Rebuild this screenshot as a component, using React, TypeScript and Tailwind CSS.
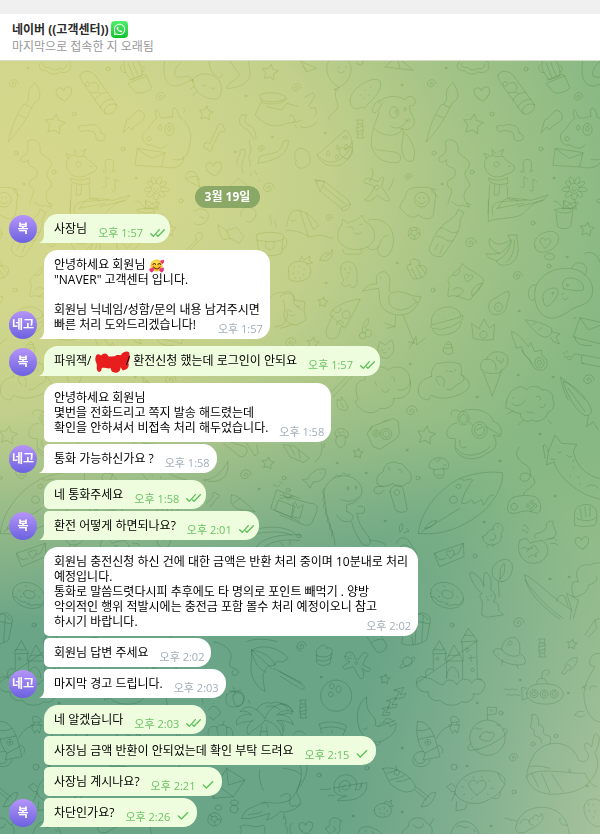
import { Fragment } from "react";
import type { ReactNode } from "react";
import { FaWhatsapp } from "react-icons/fa";

type Status = "read" | "sent";

interface Message {
  id: number;
  lines: ReactNode[];
  time: string;
  status?: Status;
}

interface Group {
  id: number;
  initials: string;
  outgoing: boolean;
  messages: Message[];
}

const groups: Group[] = [
  {
    id: 1,
    initials: "복",
    outgoing: true,
    messages: [{ id: 1, lines: ["사장님"], time: "오후 1:57", status: "read" }],
  },
  {
    id: 2,
    initials: "네고",
    outgoing: false,
    messages: [
      {
        id: 2,
        lines: [
          <>
            안녕하세요 회원님 <LoveFace />
          </>,
          '"NAVER" 고객센터 입니다.',
          "",
          "회원님 닉네임/성함/문의 내용 남겨주시면",
          "빠른 처리 도와드리겠습니다!",
        ],
        time: "오후 1:57",
      },
    ],
  },
  {
    id: 3,
    initials: "복",
    outgoing: true,
    messages: [
      {
        id: 3,
        lines: [
          <>
            파워잭/ <Scribble />/ 환전신청 했는데 로그인이 안되요
          </>,
        ],
        time: "오후 1:57",
        status: "read",
      },
    ],
  },
  {
    id: 4,
    initials: "네고",
    outgoing: false,
    messages: [
      {
        id: 4,
        lines: ["안녕하세요 회원님", "몇번을 전화드리고 쪽지 발송 해드렸는데", "확인을 안하셔서 비접속 처리 해두었습니다."],
        time: "오후 1:58",
      },
      { id: 5, lines: ["통화 가능하신가요 ?"], time: "오후 1:58" },
    ],
  },
  {
    id: 5,
    initials: "복",
    outgoing: true,
    messages: [
      { id: 6, lines: ["네 통화주세요"], time: "오후 1:58", status: "read" },
      { id: 7, lines: ["환전 어떻게 하면되나요?"], time: "오후 2:01", status: "read" },
    ],
  },
  {
    id: 6,
    initials: "네고",
    outgoing: false,
    messages: [
      {
        id: 8,
        lines: [
          "회원님 충전신청 하신 건에 대한 금액은 반환 처리 중이며 10분내로 처리",
          "예정입니다.",
          "통화로 말씀드렷다시피 추후에도 타 명의로 포인트 빼먹기 . 양방",
          "악의적인 행위 적발시에는 충전금 포함 몰수 처리 예정이오니 참고",
          "하시기 바랍니다.",
        ],
        time: "오후 2:02",
      },
      { id: 9, lines: ["회원님 답변 주세요"], time: "오후 2:02" },
      { id: 10, lines: ["마지막 경고 드립니다."], time: "오후 2:03" },
    ],
  },
  {
    id: 7,
    initials: "복",
    outgoing: true,
    messages: [
      { id: 11, lines: ["네 알겠습니다"], time: "오후 2:03", status: "read" },
      { id: 12, lines: ["사징님 금액 반환이 안되었는데 확인 부탁 드려요"], time: "오후 2:15", status: "sent" },
      { id: 13, lines: ["사장님 계시나요?"], time: "오후 2:21", status: "sent" },
      { id: 14, lines: ["차단인가요?"], time: "오후 2:26", status: "sent" },
    ],
  },
];

function LoveFace() {
  return (
    <svg viewBox="0 0 32 28" className="-my-1 inline-block h-[14px] w-4 align-middle" aria-hidden="true">
      <circle cx="15" cy="13" r="12" fill="#fbc02d" />
      <ellipse cx="14" cy="8" rx="8" ry="5" fill="#fde047" />
      <path d="M8 11q3-5 5 0M18 11q3-5 5 0M9 16q7 8 13 0" fill="none" stroke="#6b2d10" strokeWidth="2.2" strokeLinecap="round" />
      <path d="M27 10c-6-3-5-9-1-7 2-4 8 1 1 7ZM6 27c-8-3-6-10-1-8 3-5 9 1 1 8ZM26 27c-8-3-6-10-1-8 3-5 9 1 1 8Z" fill="#e8327c" />
    </svg>
  );
}

function Scribble() {
  return (
    <svg viewBox="0 0 105 66" className="-my-1 -mr-1 inline-block h-[22px] w-[35px] align-middle" aria-hidden="true">
      <path
        d="M3 14C6 8 14 8 18 14C24 6 36 4 40 16C48 18 54 14 60 16C64 8 76 14 78 12C82 2 98 -2 102 4C106 14 104 28 100 36C104 46 98 56 86 58C80 60 80 48 76 50C78 62 66 68 56 64C46 62 50 54 46 52C36 54 24 48 20 52C20 62 12 66 8 60C2 52 8 44 4 36C0 28 0 22 3 14Z"
        fill="#e81e1e"
      />
    </svg>
  );
}

function Ticks({ status }: { status: Status }) {
  return (
    <svg
      viewBox="0 0 45 24"
      className="h-2 w-[15px]"
      fill="none"
      stroke="#5dbf58"
      strokeWidth="4"
      strokeLinecap="round"
      strokeLinejoin="round"
      role="img"
      aria-label={status}
    >
      {status === "read" ? <path d="M2 14l8 8L28 2M20 18l4 4L43 2" /> : <path d="M4 12l9 9L32 2" />}
    </svg>
  );
}

function Avatar({ initials }: { initials: string }) {
  return (
    <div className="flex size-7 shrink-0 items-center justify-center rounded-full bg-linear-to-b from-[#b694f9] to-[#6c61df] text-xs font-semibold text-white">
      {initials}
    </div>
  );
}

function Bubble({ message, outgoing, first, last }: { message: Message; outgoing: boolean; first: boolean; last: boolean }) {
  const color = outgoing ? "bg-[#effddf]" : "bg-white";
  const topLeft = first ? "rounded-tl-[14px]" : "rounded-tl-[5px]";
  const bottomLeft = last ? "rounded-bl-none" : "rounded-bl-[5px]";

  return (
    <li className={`relative w-fit rounded-r-[14px] px-[10px] py-[7px] text-xs leading-[15px] ${color} ${topLeft} ${bottomLeft}`}>
      {message.lines.map((line, index) =>
        // the last line stays inline so the time can sit beside it
        index < message.lines.length - 1 ? (
          <span key={index} className="block min-h-[15px]">
            {line}
          </span>
        ) : (
          <Fragment key={index}>{line}</Fragment>
        ),
      )}
      <span
        className={`float-right mt-1 -mb-1 ml-[11px] flex items-center gap-[7px] text-[11px] leading-[15px] ${
          outgoing ? "-mr-[5px] text-[#6cc264]" : "-mr-[3px] text-[#a3adb8]"
        }`}
      >
        {message.time}
        {message.status && <Ticks status={message.status} />}
      </span>
      {last && (
        <svg viewBox="0 0 5 8" className="absolute bottom-0 -left-[5px] h-2 w-[5px]" aria-hidden="true">
          <path d="M5 0V8H0C3 7 5 4 5 0Z" fill={outgoing ? "#effddf" : "#ffffff"} />
        </svg>
      )}
    </li>
  );
}

// Wallpaper doodles. x, y, radius in pixels.
const stars = [
  [55, 124, 10], [206, 113, 7], [270, 72, 8], [169, 229, 7], [323, 302, 5], [313, 343, 6],
  [426, 435, 9], [268, 463, 6], [358, 453, 5], [385, 679, 5], [572, 644, 5],
];
const hearts = [[64, 94, 8], [214, 169, 8], [346, 153, 7], [582, 543, 7], [306, 828, 7]];
const spirals = [
  [13, 84, 5], [160, 97, 5], [261, 149, 4], [296, 88, 5], [268, 188, 6], [408, 177, 4], [329, 218, 4],
  [470, 243, 6], [517, 276, 5], [290, 343, 6], [588, 380, 6], [411, 411, 6], [301, 646, 5],
  [518, 623, 6], [513, 758, 5], [245, 475, 6],
];
const dots = [
  [28, 68, 1], [108, 69, 2], [74, 114, 2], [16, 153, 2], [123, 149, 2], [54, 172, 2], [24, 184, 1], [136, 178, 1],
  [246, 96, 1], [272, 137, 1], [235, 152, 1], [181, 201, 2], [402, 85, 1], [325, 133, 1], [360, 62, 3],
  [397, 263, 1], [326, 283, 1], [433, 290, 2], [533, 223, 2], [549, 266, 2], [567, 257, 1], [519, 311, 1],
  [518, 375, 1], [553, 377, 1], [410, 364, 1], [477, 397, 1], [407, 450, 1], [337, 463, 1], [284, 478, 2],
  [418, 478, 2], [366, 473, 1], [500, 461, 1], [540, 434, 1], [555, 496, 1], [299, 536, 2], [385, 521, 1],
  [484, 522, 1], [475, 556, 2], [550, 579, 1], [569, 577, 1], [452, 625, 2], [321, 677, 1], [477, 703, 1],
  [520, 680, 1], [568, 693, 1], [501, 713, 2], [402, 748, 1], [367, 768, 2], [319, 775, 2], [454, 767, 3],
  [467, 766, 1], [514, 792, 2], [533, 744, 2], [556, 736, 2], [402, 812, 1], [353, 816, 1], [491, 826, 1],
  [587, 786, 1], [234, 809, 4], [259, 489, 1], [288, 490, 2],
];
const candies = [[360, 129], [542, 648], [303, 709]];

// Each sheet is drawn at three times its final size.
const sheets = [
  {
    x: 0,
    y: 0,
    d: [
      "M125 185C110 195 118 215 140 212C150 225 170 225 180 215C200 225 220 205 210 195C215 185 205 183 200 180M132 190C125 200 140 205 148 202C160 215 175 210 178 205C190 210 200 205 200 192",
      "M25 425C35 380 50 340 72 312L95 322C80 360 50 400 25 425ZM78 312L85 300C90 280 75 275 105 248C125 275 125 300 103 308L97 322M55 345L75 353",
      "M240 225C250 208 270 212 285 225L350 315C352 335 325 350 312 338L262 268C250 250 240 240 240 225ZM262 245a7 7 0 1 0 1 0M275 250c15-8 25 5 20 20M270 275c10 8 20-5 30 5M285 300C290 285 315 275 322 278M300 322C305 305 330 295 338 298M315 340C305 320 335 305 350 315",
      "M375 180C365 205 380 225 395 240L425 228C430 205 415 185 410 180M365 195C355 210 370 220 378 218M425 195C440 205 430 220 425 215M385 250L440 228L455 262C450 275 420 283 408 278ZM388 240L435 222L440 228M385 190L402 235M398 188L415 228",
      "M237 380C245 370 255 382 262 375C285 370 305 380 303 400C315 400 322 418 308 422C298 425 285 420 288 408C285 390 265 392 255 392C240 400 235 390 237 380Z",
      "M370 397L380 360L390 355L412 332C425 328 440 345 430 360L400 382L395 390L388 382Z",
      "M470 355C460 330 470 315 480 350C490 360 500 350 520 350C510 320 530 310 538 352C560 360 580 400 570 430C565 470 550 485 520 478M470 355C450 370 450 385 430 400C420 420 440 440 455 435C480 450 495 445 500 435M405 495L412 445L495 458L485 500ZM412 447L455 475L495 460M447 410a7 6 0 1 0 1 0M508 370a14 18 0 1 0 1 0M508 378a5 8 0 1 0 1 0M550 470C555 500 520 510 485 500M480 375a5 8 0 1 0 1 0M552 325c5 3 3 10-2 12",
      "M495 180C485 230 500 262 530 258C560 250 570 240 578 238M545 185C520 205 515 235 540 232C560 228 575 225 580 245M578 240C590 215 640 215 660 245C668 270 665 290 650 297C620 300 580 280 578 240ZM580 245L568 238M582 260L570 268M590 275L578 288M655 235L668 225M628 180C625 205 640 225 650 228M690 180C700 205 715 215 720 225C710 240 680 250 680 265C720 265 755 245 750 215L745 180M605 255c5 4 10 4 12-2M632 262c3 6 8 6 12 2",
      "M615 430C605 440 615 450 622 445C622 458 640 455 636 443L660 395C675 400 682 385 670 382C672 368 652 368 652 382L630 430C622 425 615 428 615 430Z",
      "M725 345C715 355 715 375 735 385C755 395 750 410 765 418M740 345C730 360 735 370 750 378C765 385 768 400 768 415M725 345L740 345M780 470C810 455 840 470 850 425L865 420C865 465 830 480 775 490Z",
      "M715 500C700 480 725 470 720 450L735 448C740 480 715 485 730 520M750 420c-8 15 10 20 0 40s5 20 0 40M765 512l5 12M755 520l-4 8M780 540l-6 6M690 560L715 535L745 560",
      "M900 445C880 450 880 475 890 480C880 495 895 505 905 505C925 500 935 490 930 475C930 455 915 445 900 445M915 292L938 278L945 288L925 320M900 380C920 388 945 375 952 365M930 325L945 322L950 340L942 350",
      "M780 285C790 275 850 275 860 295C855 310 800 320 785 305ZM785 298C800 310 840 308 858 295M785 305L765 345C790 370 815 385 845 375C870 365 890 370 905 360M800 320L845 330L860 310L895 320M868 350c5-10 15-5 12 3 10 5 5 15-2 15M885 375l5 10",
      "M85 480C60 500 55 470 75 465C95 450 75 430 85 422C105 412 125 430 120 455C135 475 165 480 150 505C125 530 160 540 155 560C130 575 135 600 155 625M85 480C80 510 115 495 112 520C110 545 80 530 90 560C115 570 90 590 90 612M60 590C30 570 40 560 55 570",
      "M200 500C195 475 215 460 235 470L255 468C262 485 290 490 290 505C285 520 265 520 255 528M205 475L198 460L212 465M225 465L222 448L235 462M250 465L258 447L245 455M200 500C205 520 225 540 255 528M213 535C230 545 260 540 268 532L270 550C255 555 225 555 215 545ZM215 555L210 640M230 555L228 585L242 585L245 555M265 555C275 570 262 590 275 600C310 590 330 605 345 600L390 585L375 602L300 620M235 485a8 8 0 1 0 1 0M270 500l8-2M240 625C250 600 280 580 300 605",
      "M312 510C305 515 310 520 318 515L315 485C320 475 340 478 340 485L340 510C330 515 340 520 345 510M308 560c5 8 14 2 10-8l0-22 12 8M335 570c5 8 14 2 10-8l0-25 12 8",
      "M468 550a15 15 0 1 0 1 0M458 550C445 530 460 520 470 548C475 520 495 530 480 552C500 535 510 550 484 562C515 560 515 580 484 574C505 590 490 600 477 582C480 605 455 605 462 582C445 600 430 590 453 574C425 580 425 560 453 562C435 545 445 535 458 550M463 563l1 4M474 563l1 4M462 571q6 6 12 0M470 598L475 630M470 625C455 605 440 600 435 605C440 620 455 628 470 625",
      "M557 525C550 540 575 550 590 555L600 562L596 545C595 525 585 510 567 515ZM560 535C570 535 575 525 592 530M590 540l10-3",
    ],
  },
  {
    x: 300,
    y: 0,
    d: [
      "M90 178C70 200 80 240 117 262C155 245 165 195 140 178M103 268L117 262L113 270ZM108 268C100 300 120 310 112 325C100 345 80 345 88 360M112 212C120 222 130 220 133 212M115 202l2 4M137 200l2 4",
      "M255 200L290 170L338 210ZM290 170L300 205M0 183L50 205L20 215L10 200M5 188L20 215",
      "M150 300C155 260 220 225 240 243C250 265 220 300 200 315L195 325L185 322C165 332 150 325 150 300ZM180 285l3 0M195 270l3 0M210 262l3 0M190 295l3 0M205 285l3 0",
      "M235 310C245 290 290 280 315 300C325 280 350 290 345 310C340 320 330 315 328 320C330 345 345 350 343 370C335 395 310 390 300 385M240 300C220 310 212 330 220 338C235 340 240 320 248 308M238 335C228 365 210 400 215 440C225 480 260 490 295 488C310 475 300 455 275 455C250 450 235 455 225 445M222 385C250 415 300 410 308 385M310 395C340 420 350 455 340 480C325 492 305 480 305 435C308 420 310 410 310 395M282 320a14 17 0 1 0 1 0M288 330a4 6 0 1 0 1 0M315 322a3 6 0 1 0 1 0M272 378C285 390 310 385 322 360M318 358a6 4 0 1 0 8-2",
      "M52 465L137 390C170 420 160 470 130 490C105 505 65 500 52 465ZM60 472C90 505 145 480 155 425M84 453a5 8 0 1 0 1 0M112 436a4 6 0 1 0 1 0M135 408a7 4 0 1 0 1 0M110 465a5 6 0 1 0 1 0M139 433a5 7 0 1 0 1 0",
      "M45 540L60 573L125 625L150 612L145 600L75 545ZM45 540L75 545L60 573M68 558L135 612M125 625C120 640 150 630 152 612M50 550l5-6",
      "M195 600C210 590 215 575 225 560L200 550C185 550 190 535 205 535L235 545C240 530 255 525 250 540L245 560L270 600C265 608 250 600 232 585C220 600 200 610 195 600ZM215 505C225 520 215 535 208 545M282 535C275 550 275 560 265 570M230 555a7 7 0 1 0 1 0",
      "M300 625C298 605 320 600 318 580C330 555 360 565 375 562C400 560 412 580 405 600C405 615 402 630 400 645C390 665 370 655 355 645C330 665 315 635 300 625M365 577a22 22 0 1 0 1 0M352 603C358 614 372 614 378 603M358 592l1 4M371 592l1 4",
    ],
  },
  {
    x: 0,
    y: 200,
    d: [
      "M655 75L680 92L710 82L732 110L718 130L690 115L668 120L658 95ZM680 92L690 115M583 35C590 20 630 25 625 50C620 75 590 80 583 70M600 50l15 5M720 50C722 20 750 10 768 35C770 55 755 70 740 65",
      "M770 103C790 95 840 95 850 105L845 160C820 170 790 170 778 158ZM770 120C820 130 840 122 849 118M852 112C868 115 860 150 845 148M800 125q-12 20 12 25q18-10 8-25M812 45c-8 10 8 15 0 30M825 60c-4 8 8 12 2 20",
      "M545 165L590 120C580 105 595 92 605 100C610 112 602 125 595 124L552 172M500 160C520 150 540 165 545 185",
      "M805 300C820 270 850 280 860 275C880 270 890 300 880 310L905 330M825 380C850 380 870 360 860 330",
    ],
  },
  {
    x: 280,
    y: 200,
    d: [
      "M20 80C25 50 30 25 60 32C90 40 110 65 115 78L100 88M60 32L85 110L105 108M78 40L100 88M85 110C65 95 40 90 18 92M105 108C130 100 140 115 158 115M32 60c5 5 10 5 14 0",
      "M0 290C20 270 45 280 40 300L75 305L72 330L78 360L50 375C20 375 5 355 15 325L10 300M0 385C20 380 35 375 40 370M25 330l10 5M50 320l10-3M30 345q8 8 14-2",
      "M185 75L188 58L205 70C220 60 235 62 245 45L255 65C290 80 290 120 270 135C240 160 190 150 175 120C172 105 172 90 185 75ZM265 60C310 50 345 80 340 130C335 160 325 170 310 170C290 165 290 145 300 130C305 115 310 110 322 105M190 150C185 160 195 165 240 162C248 155 245 148 240 145M205 82C215 78 222 85 220 90M238 75l8-3M222 98c5 10 10 5 10 0 3 8 12 5 12-2M262 140C270 155 290 150 295 140",
      "M402 82a18 18 0 1 0 1 0M396 92l12-2 5 10-9 8-10-6ZM396 92l-6-6M408 90l4-6M413 100l7 2M404 108l0 10M394 102l-8 4",
      "M535 28L552 38L540 60C545 90 520 120 490 165C480 178 445 165 448 145C460 110 480 75 510 60L527 45ZM480 85C495 75 510 110 535 95M470 110C485 100 500 135 520 120M475 130L465 150M490 135L480 160",
      "M685 105L712 105L710 115C720 145 715 190 680 195C660 198 650 190 650 182C640 180 615 170 620 160C640 165 650 160 660 160C640 155 620 135 630 115C645 140 670 135 690 120ZM695 120C690 150 675 170 650 182M703 120C705 150 695 175 680 185M660 160C675 150 690 135 693 120",
      "M765 140C755 115 790 90 820 95C850 105 835 145 800 155C780 160 768 155 765 140ZM795 145C780 130 775 118 785 115C792 112 796 120 796 122C800 112 812 115 812 122C812 132 800 140 795 145M808 160a15 10 0 1 0 1 0",
      "M625 0L625 65C650 50 720 60 735 35C760 10 770 5 790 0M640 45C630 25 640 10 660 5L740 0M650 25L730 10M515 5C530 15 535 22 550 15C560 25 572 20 570 12L560 10",
      "M825 30C840 22 870 25 880 30C875 42 835 42 825 30ZM828 38L833 80C845 88 865 88 872 78L878 38M850 30L852 0M850 25C835 5 825 0 820 5M855 25C870 5 890 5 895 8C890 20 875 28 855 25",
      "M25 215C22 190 50 180 70 185C90 190 98 210 88 230C70 250 35 245 28 238C25 230 25 220 25 215ZM60 182L65 168L72 180L90 168L88 182L98 188L80 192M42 200l1 4M58 198l1 4M72 205l1 4M40 218l1 4M55 215l1 4M70 222l1 4M45 232l1 4M60 232l1 4",
      "M120 180C125 160 140 158 150 160L158 148L155 170C145 185 130 183 120 180ZM135 172L150 162",
      "M182 205C182 180 225 175 230 210C232 240 235 260 220 262C210 265 210 250 205 255C195 265 185 255 185 250L192 240C185 230 182 220 182 205ZM194 205l2 6M210 203l2 6M200 218c4 4 8 4 10 0M198 236L205 230",
      "M385 210C375 200 385 190 393 195C385 180 400 172 410 180C422 180 420 195 415 198C430 190 445 205 438 220C430 235 410 240 398 235C390 225 390 215 385 210ZM395 205L410 235M408 200L425 232M418 196L436 220",
      "M248 273C260 255 275 250 290 252M248 273L295 265M290 250C285 230 295 215 312 215C330 220 332 240 328 260C325 290 340 275 355 275C385 278 395 290 405 288L422 290C420 310 405 320 395 335C370 350 330 350 305 320C295 300 300 280 295 265M328 285C320 310 335 330 365 330C390 325 400 315 410 305M400 295L412 310M347 347L345 380L315 370M345 380L320 385M370 347L403 430M403 430L385 425M388 445L408 410L410 435L435 415M302 232l1 4",
      "M548 192C555 205 590 215 612 240C610 255 580 280 572 300C545 300 535 280 505 290C500 270 515 260 503 240C520 220 540 205 548 192ZM560 245C550 232 552 222 558 224C564 220 566 228 566 230C572 220 580 225 578 232C575 240 565 243 560 245M520 270C525 260 540 262 548 268C555 275 540 285 530 290M575 275C580 260 595 250 608 250C600 265 590 280 578 288ZM520 225C530 235 545 210 540 205",
      "M240 298L230 320L195 385L150 345C150 325 200 300 240 298ZM160 345C150 360 140 380 138 400C145 425 170 420 178 400C180 385 185 375 190 380M198 332a12 12 0 1 0 1 0M160 330a10 10 0 0 0 22-8M170 375a8 8 0 0 1 20-5",
      "M238 407a10 10 0 1 0 20 0a10 10 0 1 0-20 0M255 400a10 11 0 1 1 6 10M248 397C245 375 255 360 265 355C268 370 262 375 255 380L262 390",
      "M455 370C448 335 490 315 515 322C540 330 545 345 540 352L455 375ZM455 375C445 385 460 388 470 385C480 395 500 380 510 382C530 370 555 360 548 345L540 350M458 388C460 400 475 408 490 405C520 402 540 390 545 365M475 345l1 1M490 335l1 1M505 345l1 1M520 338l1 1M490 355l1 1",
      "M685 275C695 290 680 300 680 320C675 345 640 352 630 335C620 315 630 300 645 295C665 285 670 275 685 275ZM655 308a12 13 0 1 0 1 0M650 318l4 4",
      "M575 372L580 415C600 422 625 422 640 418L644 372L628 385L612 357L598 385ZM610 393a11 11 0 1 0 1 0",
      "M765 270C770 235 810 205 860 205C910 205 940 240 938 275C935 310 905 315 880 325C850 345 830 360 800 352C775 340 760 310 765 270ZM875 205C880 185 910 180 920 205C920 220 915 225 912 225M768 255C750 250 740 275 748 295C755 305 762 300 764 298M790 300C780 275 810 260 830 265C845 275 820 310 805 318C795 320 790 310 790 300ZM850 265C840 240 860 230 880 235C905 240 915 260 910 270C895 275 865 270 850 265ZM848 293C852 302 862 300 865 292M845 282l8-1M862 253a3 3 0 1 0 1 0M818 277a3 3 0 1 0 1 0",
      "M737 360C760 360 790 370 815 385C818 400 810 410 795 412C770 405 755 385 737 360ZM815 395L840 402L828 410L838 432L820 425L812 412M758 375L768 368M775 392L785 382",
      "M880 410L900 353L975 370L960 430ZM900 353L925 390L975 370M885 410C885 430 900 438 935 437M880 355l8-2",
      "M695 395C710 395 730 420 745 440L752 428L765 455L785 450L785 465C805 475 808 500 790 510C770 515 755 500 750 480C735 465 738 468 725 450M695 395C695 420 710 430 708 445L725 440C730 470 740 465 755 490M778 472a14 16 0 1 0 1 0M778 480a6 8 0 1 0 1 0",
      "M605 510C595 490 610 475 620 478C625 455 660 448 680 465C690 485 680 505 665 510C660 525 620 525 605 510ZM610 518L637 588L665 512M620 478C640 475 650 490 648 510M650 470c-5 20 15 5 12 20 5 0 10-10 8-15",
      "M490 455C488 440 500 425 508 425C515 432 520 450 518 460C510 465 495 463 490 455M495 445L517 443M500 433L514 435",
      "M870 470C860 465 855 475 865 478C880 485 870 460 890 462L905 465M910 465L975 478M905 490L970 502M910 465a6 13 0 1 0 0 26M850 458l5 4M860 452l1 5M852 472l5-2",
      "M415 575C410 540 450 530 455 530M545 525C570 540 575 560 560 570C540 590 480 605 455 585L445 600C430 600 415 590 415 575M455 530C450 500 475 485 480 490C500 485 520 485 540 492C545 500 545 515 543 525C560 530 550 545 540 550C520 555 520 575 500 568M480 555C460 540 470 525 475 530C485 525 500 540 490 560M500 510l2 4M525 508l2 4M508 515l8 0",
      "M235 600C220 560 230 540 255 540C255 500 300 490 325 510C350 490 390 505 390 540C395 560 370 575 355 570M305 568c5 12 20 12 22 0M285 545l5 12M335 530c8 0 10 8 8 15",
      "M842 532C860 545 900 580 915 600M842 532C845 560 860 590 865 600M295 440L300 425L315 435L335 420C345 440 345 465 320 475C300 475 290 460 295 440M305 450l4 1M325 447l4-2M310 458q6 5 10-2",
    ],
  },
  {
    x: 280,
    y: 380,
    d: [
      "M230 60C225 60 225 75 240 85C260 105 290 100 300 85C330 90 345 70 340 55C370 60 400 40 390 0M150 40L200 -10M160 50L215 -10",
      "M680 65C680 45 700 25 715 22C725 15 735 25 740 30C745 15 780 15 785 30C805 25 825 45 818 60C830 75 815 95 805 95C800 120 770 130 755 120C740 130 720 120 722 100C700 100 690 85 680 85C675 75 678 70 680 65ZM695 70C705 85 730 75 735 60M700 92L683 102M730 120L715 135M805 120L815 133M700 52l1 4M770 50c10-5 15 5 10 10M780 80c8 8 15 0 15-8M740 95c10 8 15-5 20 5",
      "M850 5C880 10 930 60 935 95C930 110 915 110 905 100C880 80 860 40 850 5ZM865 25L915 95M925 110L920 140L940 125L955 150",
      "M165 160C168 140 195 140 205 160C205 170 200 175 195 172C200 190 190 205 178 202C165 195 165 175 170 172ZM168 170C180 165 195 165 200 172M175 155l8 5M187 152l5 6",
      "M172 60C185 55 180 75 185 50C190 65 205 70 203 85C200 95 190 92 188 90C175 90 168 80 172 60ZM183 70L192 85",
      "M262 160L275 140L340 115L355 125L358 160L350 175L300 208L280 200ZM288 150a10 10 0 1 0 1 0M288 156a4 4 0 1 0 1 0M318 145a17 17 0 1 0 1 0M318 152a10 10 0 1 0 1 0M270 152L275 140M310 125l15-5",
      "M515 105C505 90 530 85 540 95C580 80 630 90 640 125C665 130 668 155 660 170L640 165C655 190 650 210 620 220C600 240 550 245 530 215C520 205 530 185 525 175C500 180 495 160 505 145C515 130 525 130 530 130M550 95a17 20 0 1 0 1 0M550 103a11 13 0 1 0 1 0M598 125a23 25 0 1 0 1 0M598 133a15 17 0 1 0 1 0M568 125L578 135M540 180C535 210 555 205 560 200M530 205C550 240 610 225 630 200M618 140L660 165M590 150L605 142",
      "M10 195L30 230L70 248L88 235L45 200ZM30 200L45 225M55 210L60 235M125 190C130 215 120 235 105 245M133 190l0 12",
      "M68 300L82 310L90 325L100 305C120 310 140 290 137 268C110 262 90 280 85 295ZM120 278l3 2",
      "M0 345L90 370C110 370 115 380 110 395L95 430C85 440 75 435 65 432L0 405M0 355L40 350M40 370L35 410L60 415L70 375M45 365l10 20 12-10",
      "M132 340C135 300 175 280 210 290C240 300 255 330 240 350C225 375 205 370 200 375L200 395C225 400 225 425 200 425C180 425 175 410 170 405M132 340L140 400C150 440 165 470 165 495M215 425C220 455 240 480 245 490C255 500 275 498 270 480C265 460 240 450 230 400L250 400C260 385 250 375 235 380M270 480L300 485C315 490 320 495 315 498M203 320a3 5 0 1 0 1 0M228 318a2 5 0 1 0 1 0M180 358C205 368 225 365 235 350M160 295l10-10 10 5 10-12 12 8 10-3M132 325l-5 12 6 10-5 12 6 10-4 12 8 8-3 14 9 8-3 14 9 8-2 14 9 8-2 14",
      "M292 310C285 290 300 280 310 275C310 250 340 240 355 250C375 250 375 265 385 272C400 285 395 310 380 310C365 325 345 320 340 310C320 320 300 325 292 310ZM330 335L345 385C350 400 375 400 382 390L370 330C365 310 335 310 330 335ZM350 328a8 9 0 1 0 1 0M310 320C290 315 280 325 282 335C295 350 310 335 312 330M325 260l5 12M355 268c8-2 12 4 10 10",
      "M447 262C445 240 470 228 490 235C510 245 508 260 502 268L490 265C495 285 490 295 480 295C465 295 458 280 462 270ZM462 270L490 265M465 240c5 8 15 5 15-5M490 255l8 0M470 285l15 0",
      "M415 460C420 400 470 330 540 295C590 275 640 275 667 278C672 310 650 350 620 385C570 430 500 470 415 460ZM540 295C555 310 570 290 578 300C560 325 545 355 545 370C570 375 575 345 580 370C600 370 605 345 610 375C625 365 620 345 640 345M435 445C440 430 460 420 470 422C465 435 450 445 435 445M520 348a12 11 0 1 0 1 0M535 313a8 6 0 1 0 1 0M425 455L540 385",
      "M805 215L800 255L822 245C830 280 870 320 920 345L975 362M790 200C788 190 800 190 805 215L825 165L845 190L890 193L880 215C890 260 920 290 975 300M812 238c5-5 10 5 15 0M860 225c5 3 8 10 15 5M795 235L790 200M835 215l4 5 4-6M880 260l1 4M870 285l1 4M895 290l1 4M900 310l1 4M880 240l1 4M920 320C930 310 950 315 955 325",
      "M718 202C700 220 715 240 730 250C755 260 755 285 745 300C730 310 715 300 722 285C735 270 760 285 765 305C760 325 735 325 730 345M700 352C720 345 745 345 765 350C785 360 788 400 770 400C755 395 740 388 715 398C690 405 680 395 683 380C685 365 690 358 700 352ZM702 370a10 10 0 1 0 1 0M743 372a5 5 0 1 0 1 0M765 372a5 5 0 1 0 1 0M755 362a5 5 0 1 0 1 0M754 383a5 5 0 1 0 1 0",
      "M885 435C880 400 885 380 900 378C915 370 935 372 945 385C955 400 950 430 945 435C925 442 900 440 885 435ZM900 385L905 415M915 380L918 410M930 380L930 410M890 415C910 425 935 425 948 412",
      "M608 470L622 462C625 445 640 450 640 450C635 430 655 425 663 435C675 445 668 455 662 460C670 480 655 495 635 495C620 495 608 485 608 470ZM640 460C655 470 645 485 630 480M652 440l1 2M625 495l-5 6M640 495l0 6",
      "M720 480C710 500 715 535 745 548C775 555 800 540 803 515C805 500 795 485 785 480M720 480L740 475L750 490L765 485L785 482M765 475C755 450 790 470 800 440C795 425 815 420 820 425C815 435 825 440 828 460C825 480 800 475 795 480M742 515c5-15 10-15 15-10 0-12 10-12 12 0 10 5 8 15-2 15l2 10-12-6-12 8M730 435c8 0 15 5 15 15M728 450c8 0 10 8 15 8M808 478c8-5 15-8 22 5M812 490c8-2 20 2 22 5M725 505c10-10 20 10 30 0",
      "M463 520L550 490L552 530L480 560ZM463 520L480 540L498 535M550 490L535 520L522 524M512 535C492 522 500 508 510 515C515 503 535 512 512 535",
      "M605 640C580 620 560 575 575 577C595 585 605 600 612 620C610 600 610 575 620 578C635 590 635 610 632 630C648 640 650 655 640 665C655 670 660 680 655 690L670 705L620 712L605 705C605 685 610 670 605 660C598 655 598 645 605 640ZM665 605C640 605 630 580 640 560C655 535 690 530 697 555C700 580 685 605 665 605ZM655 605L658 650M662 565L672 550L675 558L672 580L660 598ZM618 650l4 3M632 648l4-2M622 660l6 0",
      "M350 490C355 470 375 470 385 480L410 520C412 545 405 560 400 555M362 500C370 490 385 495 390 505M360 455c-5-10 0-20 5-25 5 10 5 20-5 25M372 458l15-5-8-8",
      "M735 585C735 620 770 670 840 718M735 585L745 590C790 620 830 665 875 690M735 600C770 650 810 690 850 715M895 660L860 640L875 690L870 718M880 650C870 620 875 600 895 605C880 570 900 550 930 555C945 545 960 550 965 550M880 650C900 655 930 630 925 615C945 610 955 600 950 590M830 665C830 650 845 640 855 650L865 680M895 660L880 715",
      "M452 640C450 615 480 600 510 610C540 620 555 650 550 665C540 690 500 690 475 675C460 665 452 655 452 640ZM485 640C485 625 515 630 520 645C518 660 488 660 485 640ZM455 650C470 650 470 670 490 665C505 685 520 670 530 675C545 675 545 660 550 655M470 630l4 4M490 618l5 2M520 630l-3 4M530 650l4 3M475 650l4 0M500 670l4-2",
      "M395 620c10 0 12 15 0 30M400 710C410 695 430 700 445 720",
    ],
  },
  {
    x: 0,
    y: 370,
    d: [
      "M683 275C690 320 660 345 610 330C640 330 665 310 683 275M670 220L720 260C735 265 750 240 735 230L690 215M740 220L765 258L775 250L770 225",
      "M620 400L640 378c-5-12 8-15 10-5 12-2 10 12 0 12L630 412M695 375C705 370 740 400 765 425M695 375C685 400 705 425 740 420C755 420 765 430 765 425M700 400L720 385",
      "M830 360L900 385M830 360L812 415L900 455M850 370l15 20 10-15M825 420l10-30 50 20-10 30ZM820 345c8 0 12 8 20 0M840 335l8 6",
      "M767 540C770 510 830 490 900 495M785 540C800 515 850 505 900 512M805 530l20 10M840 515l10 12M870 512l0 12M770 530L785 540M720 165L735 190M745 160L770 190",
    ],
  },
  {
    x: 0,
    y: 530,
    d: [
      "M755 360C780 345 830 345 865 385L850 395C840 400 830 385 825 405C815 410 800 400 795 425C785 430 790 455 795 485C765 470 745 430 755 390ZM755 360L815 415M755 360C790 365 815 380 825 405M755 360C760 390 775 420 795 425M820 415L905 458",
      "M680 495C670 520 690 535 705 530C730 530 740 505 728 490C715 480 690 480 680 495ZM705 487L700 470M705 487L690 482M705 487L722 480",
      "M640 335C690 345 700 375 690 395C680 420 720 410 715 430C700 445 690 430 700 420M740 335C760 325 800 325 830 335M890 350a18 14 0 0 0 14 14",
      "M770 540C780 520 800 515 815 520C835 510 860 525 865 540M800 530C815 525 830 530 840 540M640 520l1 1M745 510L750 520",
      "M635 15C645 5 660 -5 670 10L665 20M735 20C760 -15 860 -20 890 15M750 18C770 5 850 0 875 15",
    ],
  },
  {
    x: 280,
    y: 600,
    d: [
      "M262 112L290 155C300 162 322 150 320 135L305 110M275 130C280 120 300 115 308 120",
      "M368 110L365 130C380 140 420 135 440 120L452 60C445 35 420 35 415 45C400 40 390 50 392 60M395 110L400 135M410 60L405 130M430 50L425 125M392 60L450 72",
      "M110 160C105 145 120 145 122 138C130 130 145 140 140 145C155 140 160 150 155 160L150 190C135 200 115 198 110 185ZM108 165C125 175 145 172 157 160M112 180C130 185 140 185 155 172",
      "M195 170C195 155 215 150 222 165C228 180 225 180 235 178L250 158C265 155 268 170 258 172L248 195L270 205C272 218 262 215 255 212L245 205C255 220 252 235 245 237C235 235 225 205 220 200L195 208C185 205 190 195 195 195L210 185C200 182 195 178 195 170ZM203 168l1 2M212 165l1 2M205 176l8-2M228 185a4 4 0 1 0 1 0",
      "M368 185a14 14 0 1 0 28 0a14 14 0 1 0-28 0M366 192C350 210 365 205 385 195C410 180 410 165 395 175",
      "M168 240a47 47 0 1 0 1 0M155 250a7 8 0 1 0 1 0M175 258a8 10 0 1 0 1 0M152 275a7 8 0 1 0 1 0",
      "M0 215L60 250C80 260 75 275 60 265M0 228L55 262M0 310C30 310 40 330 35 342C20 335 10 345 0 345M0 360C12 370 15 385 10 392",
      "M410 250C405 230 430 225 440 235C430 210 445 200 460 210L460 162L457 158L478 122L498 158L495 180M460 162L498 160M460 150C470 145 480 155 492 148M497 182L522 135L550 182ZM505 168C520 160 530 172 540 165M500 185L500 235M548 180L548 235M543 125L565 85L592 122ZM552 108C565 100 570 112 582 106M546 125L550 175M590 125L592 235C610 235 620 255 612 265C605 285 590 285 580 280C585 300 560 312 545 305C530 320 495 320 480 300C460 310 440 285 445 275C425 280 408 265 410 250ZM500 235C500 190 535 190 537 235M445 235C460 235 465 250 490 255C495 235 520 235 530 255C540 230 570 235 575 250C580 240 590 235 605 240M472 172a4 4 0 1 0 1 0M562 145a5 5 0 1 0 1 0M577 205a5 5 0 1 0 1 0M565 175l20-3M572 165l2 20M526 228l2 2",
      "M640 155C640 145 655 145 665 148C665 125 685 110 705 113C720 120 722 145 718 160C730 165 740 180 735 190C710 205 650 185 640 155ZM665 148C675 165 700 175 718 165M668 180L665 195M710 195L715 205M690 123a6 6 0 1 0 1 0M680 138l4-3M655 165l1 1M680 178l1 1M705 183l1 1",
      "M845 218L855 205C855 185 875 172 892 172C892 190 880 210 862 212L855 222ZM880 182l2 2M862 195C868 192 875 198 872 205",
      "M740 280C742 255 770 250 800 252C835 252 852 270 850 285C845 305 815 315 790 312C765 312 740 300 740 280ZM740 265L725 262L727 300L742 295M770 250C770 235 785 232 795 238L802 250M785 235C785 215 790 210 805 210C810 215 808 225 800 225M672 268c8-5 12 5 20 0s12 5 20 0M680 285c8-5 12 5 20 0s12 5 20 0M762 269a12 12 0 1 0 1 0M762 275a6 6 0 1 0 1 0M792 270a12 12 0 1 0 1 0M792 276a6 6 0 1 0 1 0M822 270a12 12 0 1 0 1 0M822 276a6 6 0 1 0 1 0",
      "M260 292C240 300 225 340 235 375C245 420 290 440 320 415C335 410 350 390 348 370L330 380C325 360 305 365 295 380L285 375C290 365 285 355 275 345C260 330 258 310 260 292ZM295 380L345 362M310 365C315 350 335 355 340 365M250 385c5 5 12 3 12-2M285 430C290 440 300 435 302 425",
      "M308 325L328 320L316 338L330 338L326 346L306 346L314 330ZM320 302L348 292L336 315L352 312L348 322L322 326L332 306ZM342 270L372 262L360 284L378 280L372 292L346 298L358 276Z",
      "M118 372C150 360 185 368 200 378L190 405M118 372L125 400M125 385C150 378 175 380 195 390M40 405C45 390 65 390 75 402M155 390l3 10",
      "M413 365C435 360 460 385 472 440L435 460C415 440 405 395 413 365ZM411 390C425 395 440 390 450 385M415 418L462 408M443 418a9 9 0 1 0 1 0M443 424a3 3 0 1 0 1 0M435 460L430 480L480 470L472 440M430 455C405 450 395 475 400 490C410 505 445 505 450 480M405 475C405 495 430 495 435 482M475 435C490 440 490 455 485 460M470 415C480 395 490 385 510 378M512 352C515 345 535 348 538 365L515 368ZM515 370L510 385L518 400L525 390L532 400L538 380L530 368M505 375L540 375",
      "M622 360a53 53 0 1 0 1 0M622 358L622 322L650 322L648 342L622 345M572 430C555 445 565 455 580 450C620 445 660 420 680 400C685 385 675 385 668 388M600 410C605 395 625 390 625 400C640 390 650 405 635 415C640 425 615 425 610 420C600 420 598 415 600 410ZM630 330l8 4M585 385C595 380 600 395 605 385M650 375l10 0M590 445l8 5",
      "M740 530C745 480 770 435 820 430C870 428 890 460 895 480C920 495 935 470 920 455C905 430 920 420 935 440C940 420 940 400 950 402C965 410 955 440 945 460C970 500 935 575 850 580C800 590 750 575 740 530C770 500 850 520 915 520C925 540 935 560 950 560M755 520L775 560M785 520L810 578M815 522L850 575M868 508a4 4 0 1 0 1 0M750 500C770 495 790 500 810 505",
      "M755 345C770 335 780 360 775 375C800 375 785 400 795 405C820 405 810 425 810 430M755 345C760 365 745 380 755 385C770 390 755 405 770 410C790 415 780 425 785 430",
      "M975 165C940 150 925 175 930 195L945 200C920 240 905 270 915 310C925 350 940 365 975 370M905 265L920 255M908 258L918 268M885 345C900 355 910 350 915 345M885 345C890 330 905 335 912 335M915 105L945 60L950 85L925 112M945 60L975 50M950 260C935 255 925 260 930 270",
      "M525 580C525 540 570 510 620 512C670 515 685 540 670 560C665 580 640 590 625 600C590 620 540 610 525 580ZM590 585C570 570 560 550 570 545C580 535 590 545 592 550C600 535 620 540 618 555C615 570 600 578 590 585ZM525 560L515 550L500 560L515 575L525 575M515 602L525 580M530 605L528 632L555 628L562 612M640 595C655 600 665 590 660 575M655 520C660 535 665 545 672 550M545 560l5 3M555 540l4 4M580 530l2 5M605 528l0 5M630 540l-4 3M640 565l-6 0M625 585l-3-4M550 585l5-3M575 598l2-5",
      "M308 505L330 550C350 570 380 585 400 570C415 560 400 545 385 530C360 510 335 500 308 505ZM405 570L440 600M410 562L448 592M425 620C430 600 450 575 467 577C465 600 445 625 425 620ZM320 520C335 515 345 515 350 510M330 540C350 535 370 530 375 525M350 545C365 545 380 540 390 535M350 510a8 8 0 1 0 1 0M350 510L348 497",
      "M162 565C158 540 180 520 205 525C230 530 235 555 225 570C245 570 245 560 245 550L240 560M245 550L260 548C265 575 240 595 215 600L172 603C175 595 195 590 200 588C175 590 162 580 162 565ZM195 555C185 558 185 570 195 570C215 570 215 545 200 542C180 540 172 560 180 575M120 570c10-8 15 5 32-5M145 588c8-8 12 5 20-2",
      "M283 630C285 612 310 605 325 615C338 625 338 645 320 650C300 655 283 650 283 630ZM312 610L318 602L325 608L335 600L332 612L340 618L328 620M298 625l1 3M312 622l1 3M322 632l1 3M300 638l1 3M312 640l1 3",
      "M138 685L150 675C145 655 160 650 172 655C185 658 180 675 178 680C185 690 175 702 165 705C150 702 140 695 138 685ZM160 680C170 685 168 692 160 695M182 662l5 2M163 665l1 1",
      "M235 700C235 680 260 675 280 685C295 690 305 700 305 705M255 690l5 6M275 695l5 6M365 705C370 680 385 690 385 675C390 650 430 645 440 670C455 675 460 690 455 705M400 675C410 690 430 685 430 672M450 675L462 655M513 705C515 675 540 660 560 665C580 670 595 685 597 705M530 680C545 670 550 690 565 680M580 690l8 5",
      "M708 680C715 640 750 620 790 622C840 625 865 660 868 705M708 680C700 700 730 705 745 690C770 680 800 660 785 640L780 650L765 645L755 655C740 660 750 680 760 675M675 655c8-5 12 8 20 5s10 5 15 3M720 670C725 655 740 655 750 665M840 655C835 670 850 680 862 675M760 655l3 2M772 660l3-2",
      "M912 620C915 595 945 590 965 605M912 620C910 650 930 675 950 680L965 678M925 610l1 5M940 612l1 5M928 630l1 5M945 632l1 5M940 650l1 5",
      "M60 495C70 520 60 550 50 580L62 600C60 620 50 622 45 615C35 625 25 615 30 595C35 580 20 575 0 590M80 495C85 520 70 545 60 560M10 640c5 10 8 20 8 30M20 680l3 20",
    ],
  },
  {
    x: 0,
    y: 690,
    d: [
      "M795 85C770 50 740 40 720 65C740 60 750 70 755 75C730 70 705 80 710 105C730 90 750 100 760 90C745 100 735 120 745 135C760 115 785 110 795 90C830 100 840 120 845 140C855 120 845 100 830 92C850 90 870 95 880 105C875 80 850 70 830 75C845 60 860 60 880 65C860 35 820 30 795 85ZM785 110L775 165M800 110L805 165M785 125l15 0M782 145l20 0",
      "M625 135C620 110 640 105 650 112C660 100 680 105 680 112C695 110 700 125 698 140M650 112L655 135M680 112L680 135M668 105L672 95M700 15C705 5 725 5 730 20C735 40 720 52 710 48C700 40 698 25 700 15M625 60C640 40 655 50 662 70L640 90L628 80",
      "M650 285L680 235L735 270L700 320L640 325L625 290ZM650 285L700 320M680 235L685 285L735 270M650 285L640 325M703 330a12 8 0 1 0 1 0M655 345a10 8 0 1 0 1 0",
      "M725 385C735 350 760 355 780 340C800 330 830 350 870 330C890 315 895 280 905 270M725 385C750 390 790 375 810 370L800 390C820 385 830 375 840 365C870 370 890 355 905 340M745 375C765 370 775 372 785 365M760 362l2 2M785 345c5-10 20-8 20 5M850 235C890 240 900 250 905 255M780 240C775 260 780 280 790 300",
      "M643 368a20 20 0 1 0 1 0M636 380l12-2 5 10-9 8-10-6ZM636 380l-8-6M653 388l9 2M644 396l0 10M720 410C740 395 760 420 790 405C800 415 790 436 790 440M720 410C730 420 720 432 720 440M620 0C635 25 650 15 662 25M600 10C615 25 600 35 612 40",
      "M875 400C865 410 870 432 880 440M850 380l1 6M855 400l1 8",
    ],
  },
];

function Wallpaper() {
  return (
    <svg
      className="absolute inset-0 size-full mix-blend-soft-light"
      fill="none"
      stroke="#000000"
      strokeOpacity="0.36"
      strokeLinecap="round"
      strokeLinejoin="round"
      aria-hidden="true"
    >
      <defs>
        <path id="star" d="M0-10L3-4L10-3L5 2L6 9L0 6L-6 9L-5 2L-10-3L-3-4Z" />
        <path id="heart" d="M0 9C-8 4-11-1-9-6C-6-11-1-8 0-4C2-9 8-10 10-5C11 1 5 6 0 9Z" />
        <path id="spiral" d="M1 1C-2 2-3-2 0-3C4-4 6 0 5 3C2 8-6 6-7 1C-8-6-1-10 5-8C9-6 10-2 10 0" />
        <path id="candy" d="M-3-9L3-9L2-5L3-4L3 4L2 5L4 9L-3 9L-2 5L-3 4L-3-4L-2-5ZM-2-5L2-5M-2 5L2 5M-3-1L3-3M-3 3L3 1" />
        <g id="doodles">
          {sheets.map((sheet) => (
            <g key={`${sheet.x}-${sheet.y}`} transform={`translate(${sheet.x} ${sheet.y}) scale(0.3333)`} strokeWidth="3">
              {sheet.d.map((d) => (
                <path key={d} d={d} />
              ))}
            </g>
          ))}
          {stars.map(([x, y, r]) => (
            <use key={`${x}-${y}`} href="#star" transform={`translate(${x} ${y}) rotate(8) scale(${r / 10})`} strokeWidth={10 / r} />
          ))}
          {hearts.map(([x, y, r]) => (
            <use key={`${x}-${y}`} href="#heart" transform={`translate(${x} ${y}) rotate(-8) scale(${r / 10})`} strokeWidth={10 / r} />
          ))}
          {spirals.map(([x, y, r]) => (
            <use key={`${x}-${y}`} href="#spiral" transform={`translate(${x} ${y}) scale(${r / 10})`} strokeWidth={10 / r} />
          ))}
          {candies.map(([x, y]) => (
            <use key={`${x}-${y}`} href="#candy" x={x} y={y} />
          ))}
          {dots.map(([x, y, r]) => (
            <circle key={`${x}-${y}`} cx={x} cy={y} r={r} />
          ))}
        </g>
      </defs>
      <g transform="translate(0 -61)">
        <use href="#doodles" x="-418" />
        <use href="#doodles" />
        <use href="#doodles" x="418" />
      </g>
    </svg>
  );
}

export default function App() {
  return (
    <div className="flex min-h-screen flex-col bg-white font-['Open_Sans','Noto_Sans_CJK_KR',sans-serif] text-black">
      <div className="h-[14px] bg-[#f0f0f0]" />
      <header className="border-b border-[#d5dbc4] px-3 pt-[7px] pb-[5px] text-xs leading-[17px]">
        <h1 className="flex items-center gap-[2px] font-bold text-[#2b2b2b]">
          네이버 ((고객센터))
          <span className="flex size-[17px] items-center justify-center rounded-sm bg-linear-to-b from-[#4ff06a] to-[#0cc02c]">
            <FaWhatsapp className="size-[13px] text-white" aria-hidden="true" />
          </span>
        </h1>
        <p className="text-[#999999]">마지막으로 접속한 지 오래됨</p>
      </header>

      <main className="relative isolate flex-1 overflow-hidden bg-[#88b884] bg-[radial-gradient(50%_50%_at_108%_100%,#c6d0acb0_0%,#c6d0ac50_50%,#c6d0ac00_100%),radial-gradient(105%_57%_at_0%_16%,#d5d88d_0%,#d5d88df5_26%,#d5d88dbf_52%,#d5d88d59_75%,#d5d88d00_100%),radial-gradient(85%_60%_at_30%_98%,#6ba587_0%,#6ba587_55%,#6ba58799_78%,#6ba58700_100%)]">
        <Wallpaper />
        <div className="relative max-w-[455px] pt-[125px] pb-[7px]">
          <div className="mx-auto mb-[6px] w-fit rounded-full bg-[#5f8a4c99] px-[10px] text-xs leading-[22px] font-bold text-white">
            3월 19일
          </div>
          <div className="flex flex-col gap-[7px] pl-[9px]">
            {groups.map((group) => (
              <section key={group.id} className="flex items-end gap-[7px]">
                <Avatar initials={group.initials} />
                <ul className="flex flex-col gap-[2px]">
                  {group.messages.map((message, index) => (
                    <Bubble
                      key={message.id}
                      message={message}
                      outgoing={group.outgoing}
                      first={index === 0}
                      last={index === group.messages.length - 1}
                    />
                  ))}
                </ul>
              </section>
            ))}
          </div>
        </div>
      </main>
    </div>
  );
}
